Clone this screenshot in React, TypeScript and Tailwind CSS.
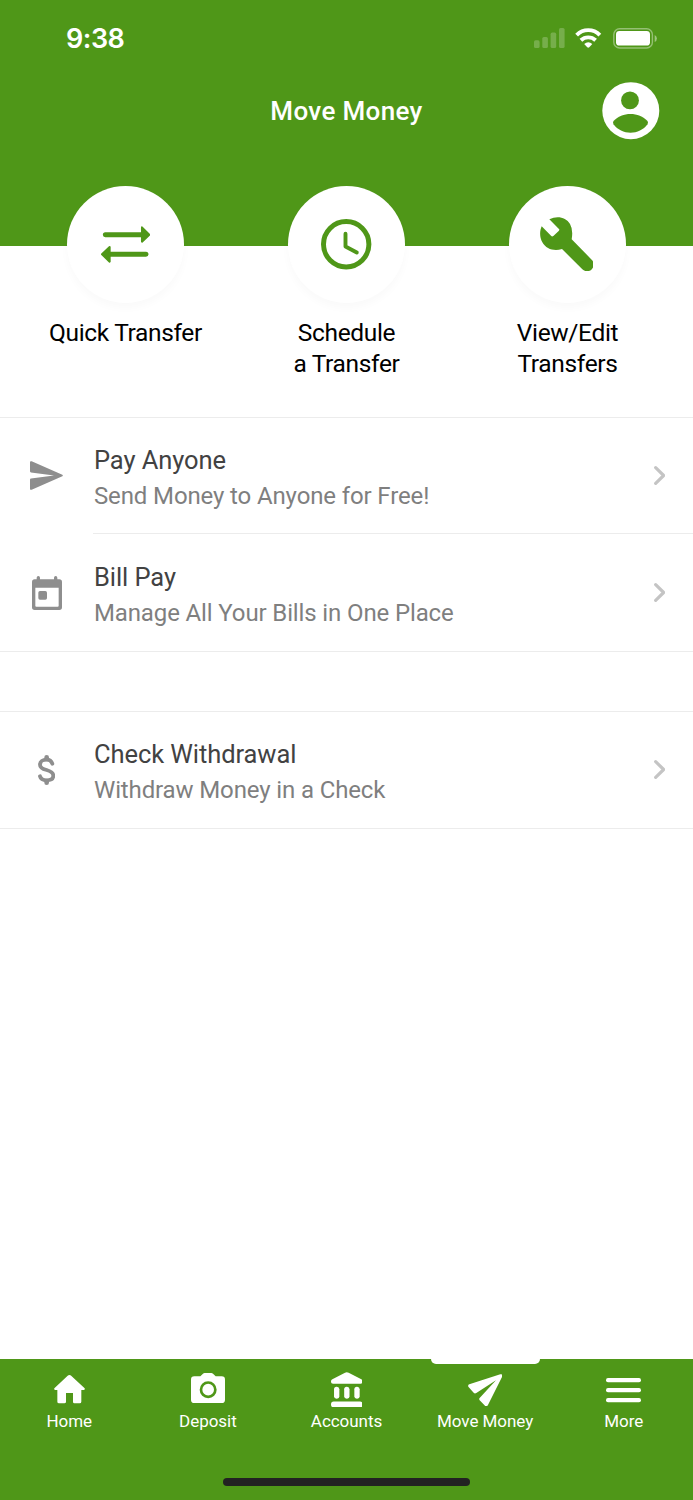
import type { ReactNode } from "react";

function SignalIcon() {
  return (
    <svg width="31" height="20" viewBox="0 0 31 20" fill="#fff" opacity="0.22">
      <rect x="0" y="12.3" width="5.6" height="7.7" rx="1.6" />
      <rect x="8.3" y="9" width="5.6" height="11" rx="1.6" />
      <rect x="16.6" y="4.6" width="5.6" height="15.4" rx="1.6" />
      <rect x="25" y="0" width="5.6" height="20" rx="1.6" />
    </svg>
  );
}

function WifiIcon() {
  return (
    <svg className="mr-px" width="26.500" height="20" viewBox="0 0 81 60" fill="none" stroke="#fff" strokeWidth="12">
      <path d="M5 21C25 1 56 1 76 21" />
      <path d="M18 37C31 25 50 25 63 37" />
      <path d="M28 48Q40.500 38 53 48L43.500 58Q40.500 61 37.500 58Z" fill="#fff" stroke="none" />
    </svg>
  );
}

function BatteryIcon() {
  return (
    <svg width="44" height="21" viewBox="0 0 44 21" fill="none">
      <rect x="0.8" y="0.8" width="38.600" height="19.200" rx="5.800" stroke="#fff" strokeOpacity="0.4" strokeWidth="1.400" />
      <rect x="3" y="3" width="34" height="14.600" rx="3.400" fill="#fff" />
      <path d="M41.700 7q2.200 1 2.200 3.500t-2.200 3.500z" fill="#fff" opacity="0.45" />
    </svg>
  );
}

function AvatarIcon() {
  return (
    <svg width="58" height="58" viewBox="0 0 58 58">
      <circle cx="28.800" cy="28.700" r="28.500" fill="#fff" />
      <circle cx="28" cy="18.400" r="8.900" fill="#4f9718" />
      <path d="M11.500 39C20 29.500 37 29.500 45.500 39Q46.500 40.500 45.500 42.300C37.500 53.500 19.500 53.500 11.500 42.300Q10.500 40.500 11.500 39Z" fill="#4f9718" />
    </svg>
  );
}

function TransferIcon() {
  return (
    <svg width="49.300" height="36.700" viewBox="0 0 148 110" fill="#4f9718" stroke="#4f9718" strokeLinecap="round" strokeLinejoin="round">
      <path d="M13 26H122M26 85H135" strokeWidth="15" />
      <path d="M123 4L145 26L123 47Z M26 63L3 85L26 107Z" strokeWidth="6" />
    </svg>
  );
}

function ClockIcon() {
  return (
    <svg width="50.400" height="50.400" viewBox="0 0 50.400 50.400" fill="none" stroke="#4f9718" strokeLinecap="round" strokeLinejoin="round">
      <circle cx="25.200" cy="25.200" r="22.700" strokeWidth="5" />
      <path d="M24.500 14.800V27.500L35.800 33.500" strokeWidth="3.900" />
    </svg>
  );
}

function WrenchIcon() {
  return (
    <svg className="mr-[2px] mb-px" width="53.700" height="54" viewBox="0 0 161 162" fill="#4f9718">
      <path d="M5 28L33 56Q36 60 40 57L56 42Q60 38 56 35L28 7C52-5 78 1 90 21Q100 38 95 67L155 128A20 20 0 0 1 127 157L66 96C44 104 18 97 7 76C-2 60-1 42 5 28Z" />
    </svg>
  );
}

function SendIcon() {
  return (
    <svg width="33" height="29" viewBox="0 0 99 87" fill="#8e8e8e">
      <path d="M0 4Q0-1 5 1L97 41Q100 43.500 97 46L5 86Q0 88 0 83V56Q0 53 3 52.600L72 43.500L3 34.400Q0 34 0 31Z" />
    </svg>
  );
}

function CalendarIcon() {
  return (
    <svg width="30" height="34" viewBox="0 0 90 102" fill="#8e8e8e">
      <path fillRule="evenodd" d="M8 10H14V5a5 5 0 0 1 10 0V10H66V5a5 5 0 0 1 10 0V10H82Q90 10 90 18V94Q90 102 82 102H8Q0 102 0 94V18Q0 10 8 10ZM10 35V89Q10 92 13 92H77Q80 92 80 89V35Z" />
      <rect x="19" y="45" width="26" height="26" rx="5" />
    </svg>
  );
}

function DollarIcon() {
  return (
    <svg width="17.300" height="30" viewBox="0 0 52 90" fill="none" stroke="#8e8e8e" strokeLinecap="round">
      <path d="M43 26C40 17 34 14 26 14C14 14 6 20 6 29C6 39 15 42 26 45C39 49 46 53 46 62C46 71 38 76 26 76C15 76 8 72 6 64" strokeWidth="11.500" />
      <path d="M26 7V12M26 78V83" strokeWidth="14" />
    </svg>
  );
}

function Chevron() {
  return (
    <svg width="11.300" height="19" viewBox="0 0 34 57" fill="none" stroke="#c4c4c4" strokeWidth="9.500" strokeLinecap="round" strokeLinejoin="round">
      <path d="M5 5L29 28.500L5 52" />
    </svg>
  );
}

function HomeIcon() {
  return (
    <svg width="31" height="28.300" viewBox="0 0 93 85" fill="#fff">
      <path d="M46.500 0q3 0 5 2L92 40q2 4-2 5H82V80q0 5-5 5H61q-4 0-4-5V54H36V80q0 5-5 5H15q-5 0-5-5V45H3q-4-1-2-5L41 2q2-2 5.500-2z" />
    </svg>
  );
}

function CameraIcon() {
  return (
    <svg className="mb-[3px]" width="34" height="30" viewBox="0 0 102 90" fill="#fff">
      <path d="M36 2q2-2 5-2H61q3 0 5 2L74 10H92q10 0 10 10V80q0 10-10 10H10Q0 90 0 80V20Q0 10 10 10H28Z" />
      <circle cx="51.500" cy="50" r="21.500" stroke="#4f9718" strokeWidth="8" />
    </svg>
  );
}

function BankIcon() {
  return (
    <svg width="31.700" height="35.300" viewBox="0 0 95 106" fill="#fff">
      <path d="M0 28Q0 24 4 22L42 2Q47-1 53 2L91 22Q95 24 95 28V30Q95 35 89 35H6Q0 35 0 30Z" />
      <rect x="9" y="44" width="16" height="36" rx="7.500" />
      <rect x="39.500" y="44" width="16" height="36" rx="7.500" />
      <rect x="70" y="44" width="16" height="36" rx="7.500" />
      <rect x="0" y="88.500" width="95" height="17.500" rx="8" />
    </svg>
  );
}

function PlaneIcon() {
  return (
    <svg className="mt-px" width="34.300" height="32.700" viewBox="0 0 103 98" fill="#fff">
      <path d="M97 1Q104-1 103 7L60 93Q56 100 51 95L35 79Q32 75 35 72L84 19L25 57Q20 60 17 56L1 38Q-1 33 4 31Z" />
    </svg>
  );
}

function MenuIcon() {
  return (
    <svg className="mt-[2px]" width="35" height="24.300" viewBox="0 0 105 73" fill="#fff">
      <rect y="0" width="105" height="13" rx="6" />
      <rect y="30" width="105" height="13" rx="6" />
      <rect y="60" width="105" height="13" rx="6" />
    </svg>
  );
}

const actions = [
  { lines: ["Quick Transfer"], icon: <TransferIcon /> },
  { lines: ["Schedule", "a Transfer"], icon: <ClockIcon /> },
  { lines: ["View/Edit", "Transfers"], icon: <WrenchIcon /> },
];

const tabs = [
  { label: "Home", icon: <HomeIcon /> },
  { label: "Deposit", icon: <CameraIcon /> },
  { label: "Accounts", icon: <BankIcon /> },
  { label: "Move Money", icon: <PlaneIcon />, active: true },
  { label: "More", icon: <MenuIcon /> },
];

function Row({ icon, title, subtitle }: { icon: ReactNode; title: string; subtitle: string }) {
  return (
    <button className="flex h-[116px] w-full items-center pr-[28px] text-left">
      <span className="mb-px flex w-[94px] shrink-0 justify-center pr-px">{icon}</span>
      <span className="flex-1 pt-[3px]">
        <span className="block text-[25.5px] leading-[36px] tracking-[-0.08px] text-[#424242]">{title}</span>
        <span className="block text-[24px] leading-[36px] tracking-[-0.13px] text-[#7f7f7f]">{subtitle}</span>
      </span>
      <span className="mb-px">
        <Chevron />
      </span>
    </button>
  );
}

export default function App() {
  return (
    <div className="flex h-[1500px] w-[693px] flex-col overflow-hidden bg-white font-['Roboto',sans-serif]">
      <header className="h-[246px] shrink-0 bg-[#4f9718] text-white">
        <div className="flex h-[76px] items-center justify-between pr-9 pl-[66px]">
          <span className="mt-[2px] font-['Inter',sans-serif] text-[27px] font-semibold tracking-[-0.5px]">9:38</span>
          <div className="flex items-center gap-[10.5px]">
            <SignalIcon />
            <WifiIcon />
            <BatteryIcon />
          </div>
        </div>
        <div className="grid h-[69px] grid-cols-[1fr_auto_1fr] items-center pr-[33px] pl-[33px]">
          <span />
          <h1 className="mt-px text-[26px] font-medium tracking-[0.35px]">Move Money</h1>
          <button className="justify-self-end">
            <AvatarIcon />
          </button>
        </div>
      </header>

      <nav className="relative -mt-[60px] grid h-[231px] shrink-0 grid-cols-3 px-[15px]">
        {actions.map((action) => (
          <button key={action.lines[0]} className="flex flex-col items-center">
            <span className="flex size-[117px] items-center justify-center rounded-full bg-white shadow-[0_5px_8px_rgba(0,0,0,0.025)]">
              {action.icon}
            </span>
            <span className="mt-[14px] text-[24.5px] leading-[31px] tracking-[-0.35px] text-black">
              {action.lines.map((line) => (
                <span key={line} className="block">{line}</span>
              ))}
            </span>
          </button>
        ))}
      </nav>

      <main className="flex-1">
        <section className="border-y border-[#ececec]">
          <Row icon={<SendIcon />} title="Pay Anyone" subtitle="Send Money to Anyone for Free!" />
          <div className="-mt-px mb-px ml-[93px] h-px bg-[#ececec]" />
          <Row icon={<CalendarIcon />} title="Bill Pay" subtitle="Manage All Your Bills in One Place" />
        </section>
        <section className="mt-[59px] border-y border-[#ececec]">
          <Row icon={<DollarIcon />} title="Check Withdrawal" subtitle="Withdraw Money in a Check" />
        </section>
      </main>

      <footer className="flex h-[141px] shrink-0 flex-col items-center bg-[#4f9718] text-white">
        <div className="grid w-full grid-cols-5">
          {tabs.map((tab) => (
            <button key={tab.label} className="relative flex flex-col items-center pt-[11px]">
              {tab.active && <span className="absolute top-0 h-[5px] w-[109px] rounded-b-[5px] bg-white" />}
              <span className="flex h-[39px] items-center">{tab.icon}</span>
              <span className="text-[17px] leading-6 tracking-[-0.05px]">{tab.label}</span>
            </button>
          ))}
        </div>
        <div className="mt-auto mb-[14px] h-2 w-[247px] rounded-full bg-[#222]" />
      </footer>
    </div>
  );
}
